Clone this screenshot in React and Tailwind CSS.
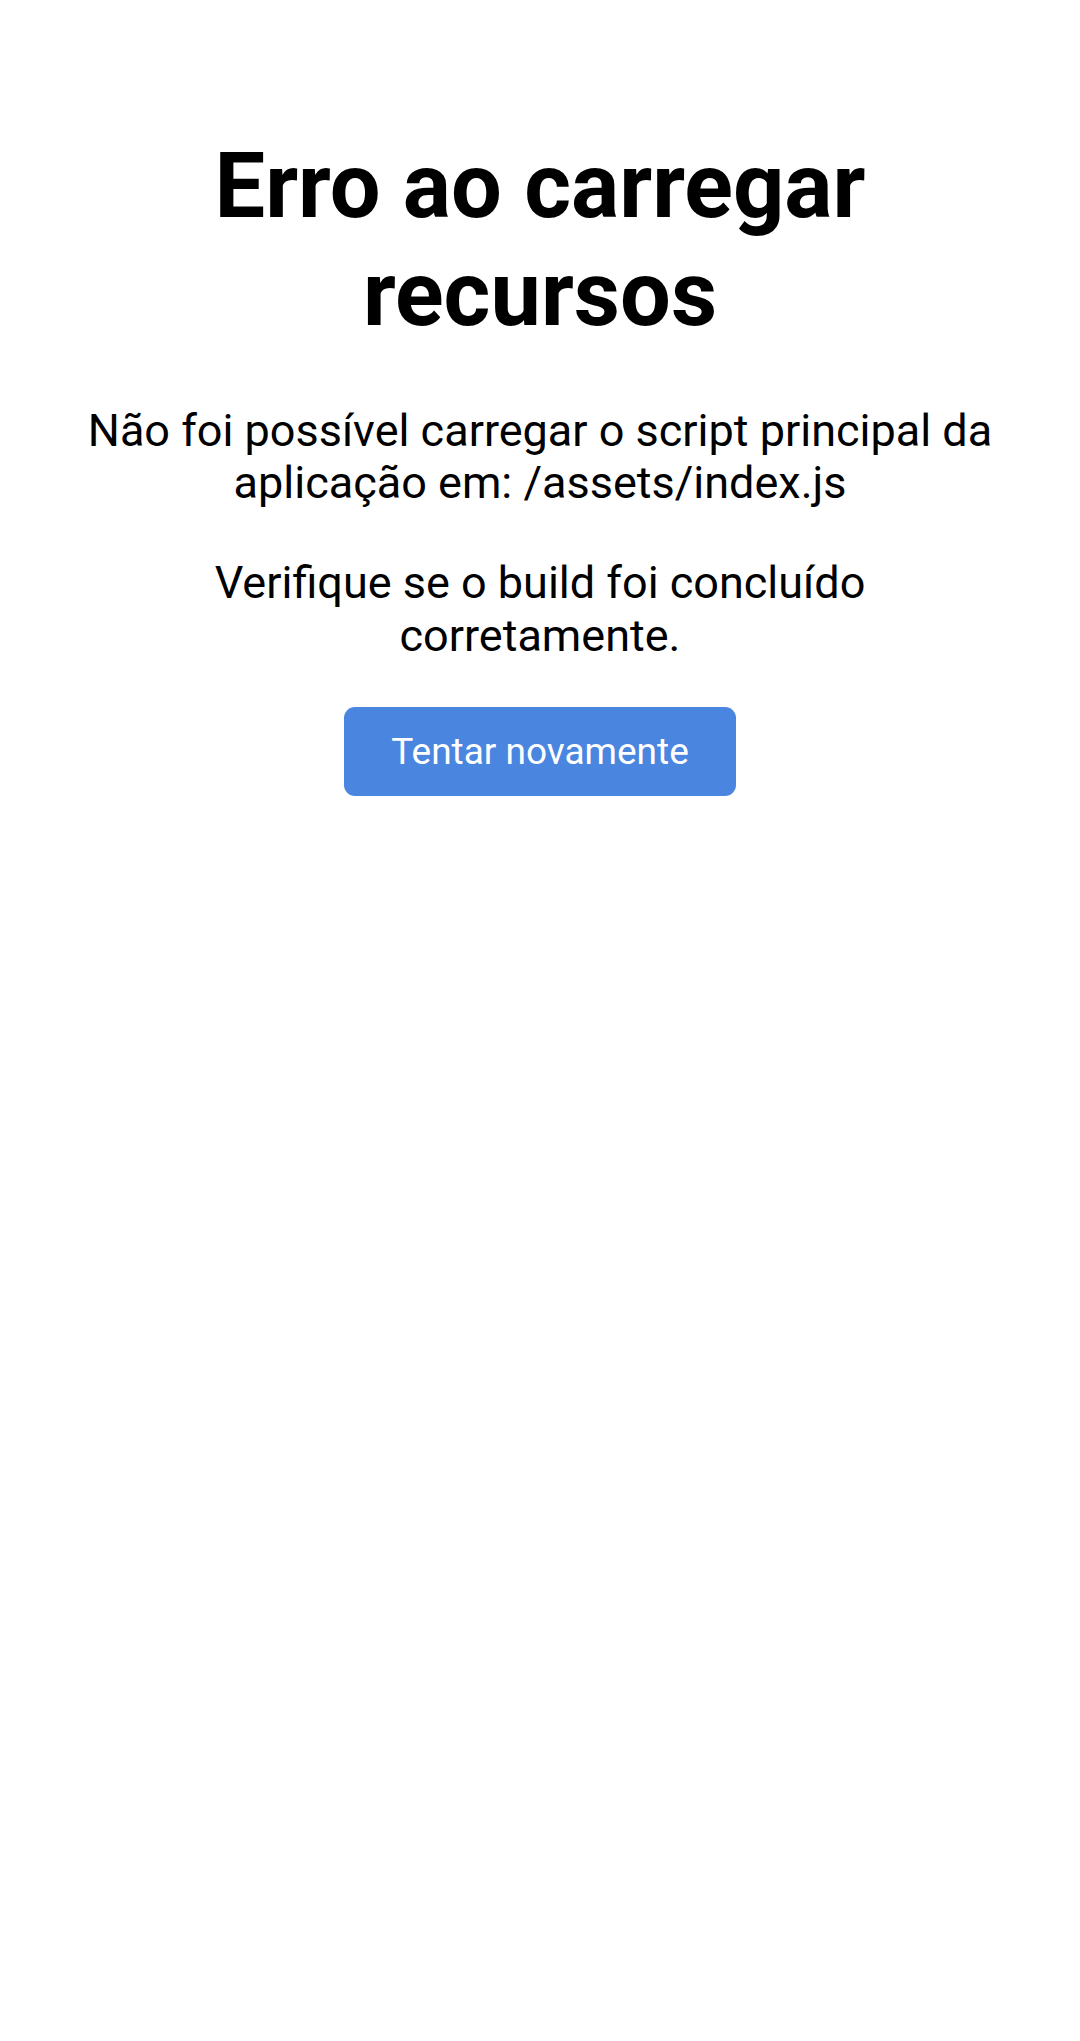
export default function App() {
  return (
    <div className="min-h-[2041px] bg-white font-['Roboto',sans-serif] text-black">
      <div className="mx-auto w-[930px] pt-[133px] text-center">
        <h1 className="text-[90px] font-bold leading-[107.8px]">Erro ao carregar recursos</h1>
        <p className="mt-[56px] text-[45px] leading-[52.7px]">
          Não foi possível carregar o script principal da aplicação em: /assets/index.js
        </p>
        <p className="mt-[47px] text-[45px] leading-[52.7px]">
          Verifique se o build foi concluído corretamente.
        </p>
        <button
          className="mt-[45px] h-[89px] w-[392px] rounded-[11px] bg-[#4a85e0] text-[37px] text-white"
          onClick={() => window.location.reload()}
        >
          Tentar novamente
        </button>
      </div>
    </div>
  );
}
